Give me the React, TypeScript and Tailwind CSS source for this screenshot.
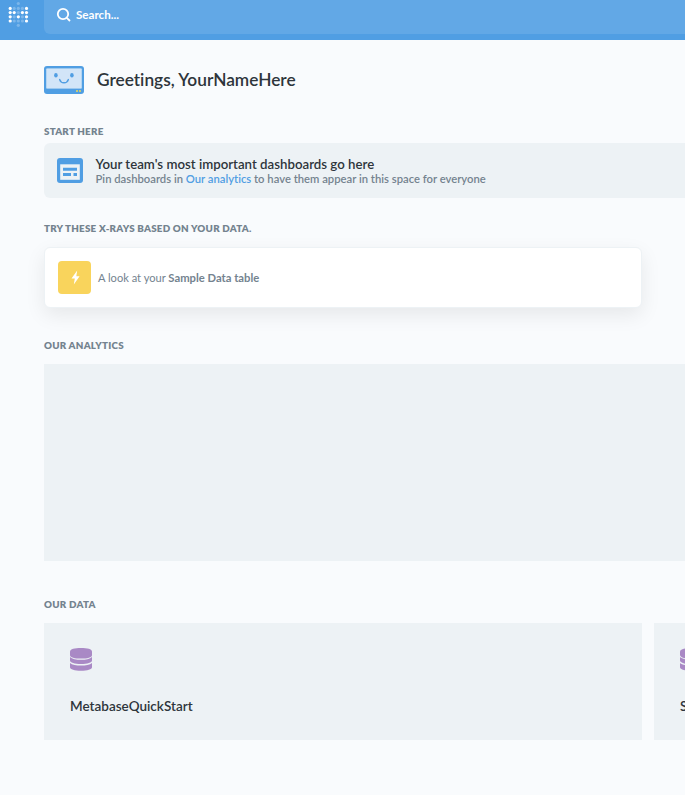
import type { ReactNode } from "react";

const logoDots: [number, number, boolean][] = [
  [18.3, 3.5, false],
  [10.2, 8.4, true], [14.2, 8.4, false], [18.3, 8.4, false], [22.4, 8.4, false], [26.5, 8.4, true],
  [10.2, 12.6, true], [14.2, 12.6, true], [18.3, 12.6, false], [22.4, 12.6, true], [26.5, 12.6, true],
  [10.2, 16.8, true], [14.2, 16.8, false], [18.3, 16.8, true], [22.4, 16.8, false], [26.5, 16.8, true],
  [10.2, 21, true], [14.2, 21, false], [18.3, 21, false], [22.4, 21, false], [26.5, 21, true],
  [18.3, 25.3, false],
];

function Logo() {
  return (
    <svg className="block h-10 w-11 shrink-0" viewBox="0 0 44 40" fill="#fff">
      {logoDots.map(([x, y, on], i) => (
        <circle key={i} cx={x} cy={y} r={1.6} opacity={on ? 1 : 0.25} />
      ))}
    </svg>
  );
}

function Metabot() {
  return (
    <svg className="block h-7 w-10 shrink-0" viewBox="0 0 40 28">
      <rect width="40" height="28" rx="3" fill="#509ee3" />
      <rect x="2" y="2.2" width="36" height="20.6" rx="1" fill="#9fcaf0" />
      <rect x="2.6" y="2.8" width="34.8" height="19.4" rx="0.5" fill="#d2e5f8" />
      <ellipse cx="11.9" cy="9.2" rx="1.8" ry="2.2" fill="#509ee3" />
      <ellipse cx="27.9" cy="9.2" rx="1.8" ry="2.2" fill="#509ee3" />
      <path d="M15.7 13.6C17 17.9 23 17.9 24.3 13.6" fill="none" stroke="#509ee3" strokeWidth="1.5" strokeLinecap="round" />
      <path d="M32 24h2v2h-2zM35 24h2v2h-2z" fill="#c5c97c" />
    </svg>
  );
}

function Database() {
  return (
    <svg className="block h-6 w-[22px]" viewBox="0 0 22 24" fill="#a989c5">
      <path d="M0 4.6C0 2.1 4.7 1 11 1s11 1.1 11 3.6v3.3c0 2.5-4.7 3.7-11 3.7S0 10.4 0 7.9z" />
      <path d="M0 9.9c2 2 6.3 2.8 11 2.8s9-.8 11-2.8v3.7c0 2.3-4.7 3.5-11 3.5S0 15.9 0 13.6z" />
      <path d="M0 16c2 1.9 6.3 2.5 11 2.5s9-.6 11-2.5v4.2c0 2.2-4.7 3.6-11 3.6S0 22.4 0 20.2z" />
    </svg>
  );
}

function Heading({ children }: { children: ReactNode }) {
  return <h2 className="h-4 text-[9.8px] leading-4 font-extrabold tracking-[0.23px] whitespace-nowrap text-[#74838f]">{children}</h2>;
}

function DataCard({ name }: { name: string }) {
  return (
    <div className="h-[117px] w-[598px] shrink-0 bg-[#edf2f5] px-[26px] pt-6">
      <Database />
      <div className="mt-[25px] text-[13.5px] leading-5 font-semibold text-[#2e353b]">{name}</div>
    </div>
  );
}

export default function App() {
  return (
    <div className="h-[795px] w-[685px] overflow-hidden bg-[#f9fbfd] font-['Lato',sans-serif] [font-variant-ligatures:none]">
      <header className="flex h-10 bg-[#509ee3]">
        <Logo />
        <div className="flex h-[34px] flex-1 rounded-bl-md bg-[#62a8e6] pl-3">
          <svg className="mt-[7px] h-4 w-4" viewBox="0 0 16 16" fill="none" stroke="#fff" strokeWidth="1.8">
            <circle cx="7" cy="7" r="5.2" />
            <path d="m10.8 10.8 3.2 3.2" />
          </svg>
          <span className="ml-1 pt-[5px] text-[11.6px] leading-5 font-bold text-white">Search...</span>
        </div>
      </header>
      <main className="pt-[26px] pl-11">
        <div className="flex h-7 items-center">
          <Metabot />
          <h1 className="ml-[13px] text-[17.3px] leading-6 font-semibold text-[#2e353b]">Greetings, YourNameHere</h1>
        </div>
        <section className="pt-[29px]">
          <Heading>START HERE</Heading>
          <div className="mt-1 flex h-[55px] rounded-l-md bg-[#edf2f5] pt-[15px] pl-[13px]">
            <svg className="h-[25px] w-[26px] shrink-0" viewBox="0 0 26 25">
              <rect width="26" height="25" rx="3" fill="#509ee3" />
              <path d="M3.2 6.3h19.6v15.500H3.2z" fill="#edf2f5" />
              <path d="M6 9.7h14v3H6zM6 15h8v3H6zM16.5 15H20v3h-3.5z" fill="#509ee3" />
            </svg>
            <div className="ml-[13px] -mt-[2px] whitespace-nowrap">
              <div className="-ml-[0.5px] text-[13.25px] leading-4 font-semibold text-[#2e353b]">Your team's most important dashboards go here</div>
              <div className="-ml-[0.5px] text-[11.26px] leading-[14px] font-semibold text-[#74838f]">
                Pin dashboards in <a className="text-[#509ee3]">Our analytics</a> to have them appear in this space for everyone
              </div>
            </div>
          </div>
        </section>
        <section className="pt-[22px]">
          <Heading>TRY THESE X-RAYS BASED ON YOUR DATA.</Heading>
          <div className="mt-[11px] flex h-[61px] w-[598px] items-center rounded-md border border-[#edf2f5] bg-white pl-[13px] shadow-[0_7px_20px_rgba(0,0,0,0.08)]">
            <div className="flex h-[33px] w-[33px] items-center justify-center rounded bg-[#f9d45c] pl-px">
              <svg className="h-[15px] w-[9px]" viewBox="0 0 9 15" fill="#fff">
                <path d="M6.2.5.5 8.4h3.3l-1 6.1L8.6 6.3H5.3z" />
              </svg>
            </div>
            <div className="ml-[7px] text-[11.1px] leading-4 text-[#74838f]">
              A look at your <strong className="text-[11.25px] font-bold">Sample Data table</strong>
            </div>
          </div>
        </section>
        <section className="pt-[29px]">
          <Heading>OUR ANALYTICS</Heading>
          <div className="mt-[11px] h-[197px] bg-[#edf2f5]" />
        </section>
        <section className="pt-[35px]">
          <Heading>OUR DATA</Heading>
          <div className="mt-[11px] flex gap-3">
            <DataCard name="MetabaseQuickStart" />
            <DataCard name="Sample Database" />
          </div>
        </section>
      </main>
    </div>
  );
}
